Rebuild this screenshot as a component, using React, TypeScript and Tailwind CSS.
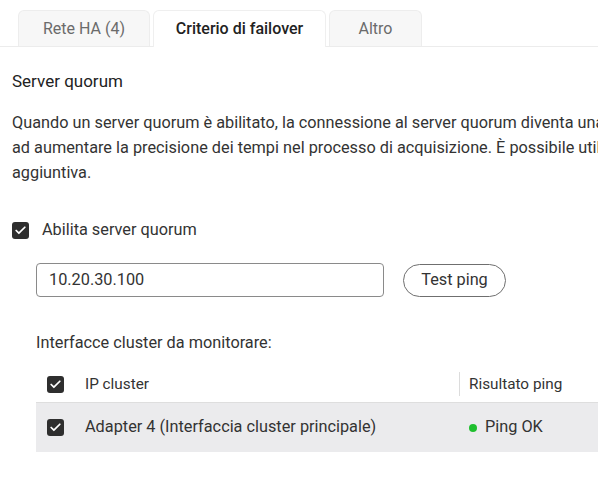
import { Check } from "lucide-react";

function Box() {
  return (
    <span className="flex h-[17px] w-[17px] shrink-0 items-center justify-center rounded-[3px] bg-[#2e2e2e]">
      <Check className="h-[13px] w-[13px] text-white" strokeWidth={3.2} />
    </span>
  );
}

const tabs = [
  { label: "Rete HA (4)", w: "w-[132px]" },
  { label: "Criterio di failover", w: "w-[173px]", active: true },
  { label: "Altro", w: "w-[93px]" },
];

export default function App() {
  return (
    <div className="h-[493px] w-[598px] overflow-hidden bg-white font-['Roboto',sans-serif] text-[#333]">
      {/* tabs */}
      <div className="flex items-end gap-[3px] border-b border-[#ececec] pl-[18px] pt-[10px]">
        {tabs.map((t) => (
          <div
            key={t.label}
            className={
              t.active
                ? `${t.w} -mb-px flex h-[37px] items-center justify-center rounded-t-[6px] border border-b-0 border-[#efefef] bg-white text-[16px] font-medium text-[#222]`
                : `${t.w} flex h-[36px] items-center justify-center rounded-t-[6px] border border-b-0 border-[#ededed] bg-[#f7f7f7] text-[16px] text-[#6b6b6b]`
            }
          >
            {t.label}
          </div>
        ))}
      </div>

      <div className="pl-[12px]">
        <h2 className="mt-[22px] text-[17px] leading-[24px] text-[#222]">Server quorum</h2>
        <div className="mt-[17px] overflow-hidden whitespace-nowrap text-[16.3px] leading-[25px] text-[#333]">
          <p>
            Quando un server quorum è abilitato, la connessione al server quorum diventa una
            condizione per il failover, contribuendo
          </p>
          <p>
            ad aumentare la precisione dei tempi nel processo di acquisizione. È possibile utilizzare
            il server quorum come verifica
          </p>
          <p>aggiuntiva.</p>
        </div>

        <label className="mt-[35px] flex h-[20px] items-center gap-[13px] text-[16.3px]">
          <Box />
          <span>Abilita server quorum</span>
        </label>

        <div className="ml-[24px] mt-[23px]">
          <div className="flex items-center gap-[19px]">
            <div className="flex h-[34px] w-[348px] items-center rounded-[4px] border border-[#8a8a8a] px-[12px] text-[16.3px] text-[#333]">
              10.20.30.100
            </div>
            <button className="h-[33px] w-[103px] rounded-full border border-[#6f6f6f] text-[16.3px] text-[#333]">
              Test ping
            </button>
          </div>

          <div className="mt-[36px] text-[16.3px] leading-[20px]">Interfacce cluster da monitorare:</div>

          <div className="mt-[13px]">
            <div className="flex h-[37px] items-center border-b border-[#dedede] pl-[11px]">
              <Box />
              <span className="ml-[21px] w-[374px] text-[15.3px]">IP cluster</span>
              <span className="h-[24px] w-px bg-[#dcdcdc]" />
              <span className="ml-[9px] text-[15.3px] text-[#333]">Risultato ping</span>
            </div>
            <div className="flex h-[49px] items-center bg-[#ebebed] pl-[11px]">
              <Box />
              <span className="ml-[21px] w-[384px] text-[16.3px]">
                Adapter 4 (Interfaccia cluster principale)
              </span>
              <span className="h-[8px] w-[8px] rounded-full bg-[#1fbf2f]" />
              <span className="ml-[8px] text-[16.3px]">Ping OK</span>
            </div>
          </div>
        </div>
      </div>
    </div>
  );
}
